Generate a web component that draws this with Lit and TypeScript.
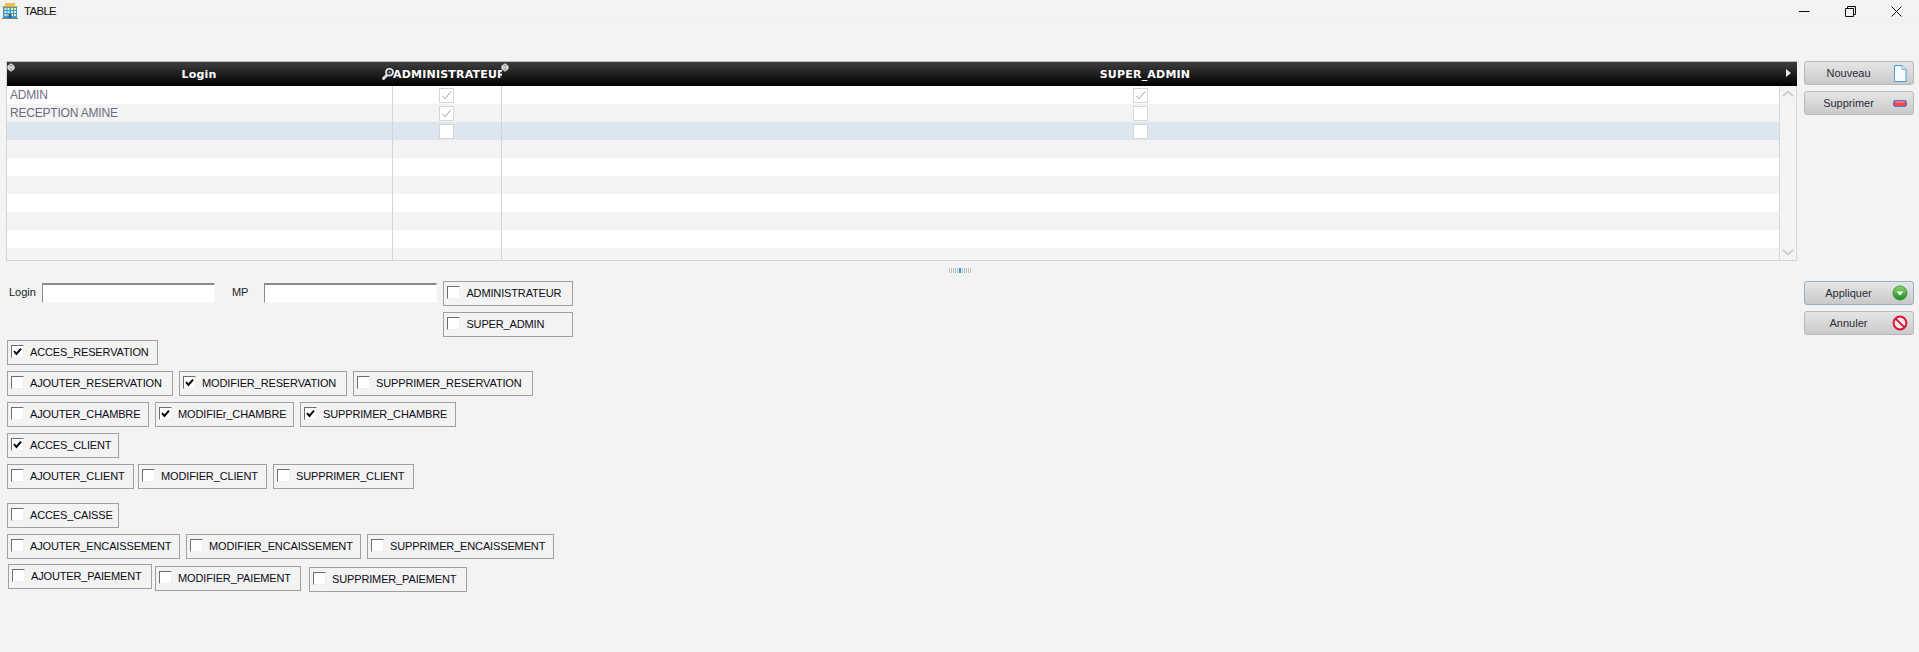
import { LitElement, html, css, svg } from "lit";
import { customElement } from "lit/decorators.js";

interface Perm { label: string; width: number; left: number; top?: number; checked?: boolean; }
interface PermRow { top: number; items: Perm[]; }

const ROWS: PermRow[] = [
  { top: 3, items: [{ label: "ACCES_RESERVATION", width: 151, left: 0, checked: true }] },
  { top: 6, items: [
    { label: "AJOUTER_RESERVATION", width: 166, left: 0 },
    { label: "MODIFIER_RESERVATION", width: 168, left: 6, checked: true },
    { label: "SUPPRIMER_RESERVATION", width: 180, left: 6 },
  ] },
  { top: 6, items: [
    { label: "AJOUTER_CHAMBRE", width: 142, left: 0 },
    { label: "MODIFIEr_CHAMBRE", width: 139, left: 6, checked: true },
    { label: "SUPPRIMER_CHAMBRE", width: 156, left: 6, checked: true },
  ] },
  { top: 6, items: [{ label: "ACCES_CLIENT", width: 112, left: 0, checked: true }] },
  { top: 6, items: [
    { label: "AJOUTER_CLIENT", width: 127, left: 0 },
    { label: "MODIFIER_CLIENT", width: 129, left: 4 },
    { label: "SUPPRIMER_CLIENT", width: 141, left: 6 },
  ] },
  { top: 14, items: [{ label: "ACCES_CAISSE", width: 112, left: 0 }] },
  { top: 6, items: [
    { label: "AJOUTER_ENCAISSEMENT", width: 173, left: 0 },
    { label: "MODIFIER_ENCAISSEMENT", width: 175, left: 6 },
    { label: "SUPPRIMER_ENCAISSEMENT", width: 187, left: 6 },
  ] },
  { top: 5, items: [
    { label: "AJOUTER_PAIEMENT", width: 144, left: 1 },
    { label: "MODIFIER_PAIEMENT", width: 146, left: 3, top: 2 },
    { label: "SUPPRIMER_PAIEMENT", width: 158, left: 8, top: 3 },
  ] },
];

type TRow = { login: string; admin?: boolean; sup?: boolean; box?: boolean; selected?: boolean };
const TABLE_ROWS: TRow[] = [
  { login: "ADMIN", box: true, admin: true, sup: true },
  { login: "RECEPTION AMINE", box: true, admin: true },
  { login: "", box: true, selected: true },
  ...Array.from({ length: 7 }, () => ({ login: "" })),
];

const hotelIcon = svg`<svg width="16" height="16" viewBox="0 0 16 16">
  <rect x="3" y="0" width="10" height="3" fill="#f5c04a"/>
  <rect x="1" y="3" width="14" height="12" fill="#2f9be0"/>
  <rect x="0" y="3" width="16" height="1" fill="#f5a623"/>
  <rect x="0" y="15" width="16" height="1" fill="#8a7a55"/>
  ${[5, 8, 11].flatMap((y) => [2.5, 5.5, 9, 12].map((x) => svg`<rect x=${x} y=${y} width="2" height="2" fill="#ffe9a8"/>`))}
  <rect x="6.5" y="11" width="3" height="4" fill="#16689f"/>
</svg>`;

const newIcon = svg`<svg width="14" height="17" viewBox="0 0 14 17">
  <path d="M1.5 .5H9L13 4.5V16.5H1.5Z" fill="#f6fbff" stroke="#4a9ad8"/>
  <path d="M9 .5V4.5H13" fill="#d5e8f6" stroke="#7ab6e4"/>
</svg>`;

const removeIcon = svg`<svg width="14" height="7" viewBox="0 0 14 7">
  <rect x=".5" y=".5" width="13" height="6" rx="1.5" fill="#f8474f" stroke="#3f86d8"/>
  <rect x="2" y="1.5" width="10" height="1" fill="#ff9a9e"/>
</svg>`;

const applyIcon = svg`<svg width="16" height="16" viewBox="0 0 16 16">
  <defs><linearGradient id="ga" x1="0" y1="0" x2="0" y2="1"><stop offset="0" stop-color="#8fd46a"/><stop offset="1" stop-color="#1c8a22"/></linearGradient></defs>
  <circle cx="8" cy="8" r="7" fill="url(#ga)" stroke="#2b8a2b" stroke-width=".8"/>
  <path d="M4.5 6.5H11.5L8 10.5Z" fill="#fff"/>
</svg>`;

const cancelIcon = svg`<svg width="16" height="16" viewBox="0 0 16 16">
  <circle cx="8" cy="8" r="6.4" fill="#f4e6e8" stroke="#d3163c" stroke-width="2"/>
  <path d="M3.6 3.6L12.4 12.4" stroke="#d3163c" stroke-width="2"/>
</svg>`;

const keyIcon = svg`<svg width="12" height="12" viewBox="0 0 12 12">
  <path d="M5 7L1.6 10.4" stroke="#d8d8d8" stroke-width="3" stroke-linecap="round"/>
  <circle cx="7.5" cy="4.2" r="3.5" fill="#333" stroke="#e4e4e4" stroke-width="1.8"/>
  <circle cx="7.5" cy="4.2" r="1" fill="#aaa"/>
</svg>`;

const gripIcon = svg`<svg width="8" height="9" viewBox="0 0 8 9">
  <path d="M4 .2L7.6 3V6L4 8.8L.4 6V3Z" fill="#d8d8d8"/>
  <path d="M4 1.4L6 3.4H2Z" fill="#9a9a9a"/>
  <path d="M4 7.6L6 5.4H2Z" fill="#9a9a9a"/>
</svg>`;

const tableCheck = svg`<svg width="13" height="13" viewBox="0 0 13 13"><path d="M2.5 7L5 9.7L10.8 2.8" fill="none" stroke="#9a9aa2" stroke-width="1"/></svg>`;
const boxCheck = svg`<svg width="11" height="11" viewBox="0 0 11 11"><path d="M2 5L4.4 8L9 2.6" fill="none" stroke="#000" stroke-width="2"/></svg>`;

@customElement("perm-box")
class PermBox extends LitElement {
  static properties = { label: {}, checked: { type: Boolean } };
  label = "";
  checked = false;
  static styles = css`
    :host { display: block; }
    .box { height: 25px; box-sizing: border-box; border: 1px solid #a0a0a0; display: flex; align-items: center; padding: 0 0 2px 3px; white-space: nowrap; overflow: hidden; }
    .check { width: 13px; height: 13px; box-sizing: border-box; background: #fff; border-top: 1px solid #6e6e6e; border-left: 1px solid #6e6e6e; border-right: 1px solid #f0f0f0; border-bottom: 1px solid #f0f0f0; margin-right: 6px; flex: none; display: flex; }
    .text { font: 11px "Liberation Sans", Arial, sans-serif; letter-spacing: -.14px; color: #0b0b14; }
  `;
  render() {
    return html`<div class="box"><span class="check">${this.checked ? boxCheck : ""}</span><span class="text">${this.label}</span></div>`;
  }
}

@customElement("app-root")
class AppRoot extends LitElement {
  static styles = css`
    :host { display: block; width: 1919px; height: 652px; background: #f3f3f3; overflow: hidden; font: 11px "Liberation Sans", Arial, sans-serif; }
    .titlebar { height: 23px; display: flex; align-items: center; background: #f3f3f3; border-bottom: 1px solid #f1f1f1; box-sizing: border-box; padding-left: 2px; }
    .title { font-size: 11.5px; letter-spacing: -.7px; color: #111; margin-left: 6px; }
    .wincontrols { margin-left: auto; display: flex; }
    .winbtn { width: 46px; height: 22px; display: flex; align-items: center; justify-content: center; }
    .top { display: flex; margin-top: 38px; padding-left: 6px; }
    .table { width: 1791px; height: 200px; box-sizing: border-box; border: 1px solid #d4d4d4; border-top-color: #bdbdbd; border-right: 0; position: relative; overflow: hidden; background: #fff; flex: none; }
    .thead { display: grid; grid-template-columns: 386px 109px 1295px; height: 24px; background: linear-gradient(#3e3e3e, #000); color: #fff; font: bold 11px "DejaVu Sans", Verdana, sans-serif; letter-spacing: .2px; }
    .th { display: flex; align-items: center; justify-content: center; overflow: hidden; white-space: nowrap; }
    .th.login { padding-right: 2px; box-sizing: border-box; }
    .th.clip { justify-content: flex-start; padding-left: 0; }
    .th.wide { padding-right: 9px; box-sizing: border-box; }
    .tr { display: grid; grid-template-columns: 386px 109px 1278px; height: 18px; background: #fff; }
    .tr.alt { background: #f3f3f3; }
    .tr.sel { background: #dce6f1; }
    .td { display: flex; align-items: center; justify-content: center; border-right: 1px solid #d4d4d4; box-sizing: border-box; padding-right: 2px; }
    .td.first { justify-content: flex-start; padding: 0 0 0 3px; font-size: 12px; letter-spacing: -.2px; color: #6c6c7c; }
    .td.last { border-right: 0; }
    .tick { width: 15px; height: 15px; box-sizing: border-box; border: 1px solid #d6d6d6; background: #fff; display: flex; }
    .overlay { position: absolute; }
    .grip1 { left: 0; top: 0; }
    .grip2 { left: 494px; top: 0; }
    .keyic { left: 375px; top: 6px; }
    .sortarrow { right: 6px; top: 7px; width: 0; height: 0; border-left: 5px solid #e8e8e8; border-top: 4px solid transparent; border-bottom: 4px solid transparent; }
    .scrollbar { right: 0; top: 24px; bottom: 0; width: 18px; background: #f3f3f3; border-left: 1px solid #d8d8d8; border-right: 1px solid #d8d8d8; box-sizing: border-box; display: flex; flex-direction: column; justify-content: space-between; align-items: center; padding: 4px 0; }
    .side { display: flex; flex-direction: column; gap: 6px; margin-left: 7px; width: 110px; flex: none; }
    .btn { height: 24px; box-sizing: border-box; border: 1px solid #b8b8b8; border-radius: 3px; background: linear-gradient(#e6e6e6, #c9c9c9); display: flex; align-items: center; padding-right: 5px; color: #2c2c3c; }
    .btn.focus { border-color: #8fb2c6; }
    .btn .lbl { flex: 1; text-align: center; }
    .btn .ic { width: 16px; height: 18px; display: flex; align-items: center; justify-content: center; flex: none; }
    .splitter { height: 20px; display: flex; align-items: flex-start; justify-content: center; gap: 1px; padding-top: 7px; box-sizing: border-box; }
    .splitter i { width: 1px; height: 5px; background: #bdbdbd; }
    .splitter i.on { width: 2px; background: #1e9ae0; }
    .lower { display: flex; padding-left: 7px; }
    .left { width: 1790px; flex: none; }
    .form { display: flex; align-items: flex-start; }
    .flabel { color: #222; margin-top: 5px; }
    .input { height: 20px; width: 173px; box-sizing: border-box; background: #fff; border-top: 2px solid #8a8a8a; border-left: 1px solid #8a8a8a; border-right: 1px solid #fafafa; border-bottom: 1px solid #fafafa; margin-top: 2px; }
    .lg { margin-left: 2px; margin-right: 6px; }
    .mp { margin-left: 17px; margin-right: 16px; }
    .pair { display: flex; flex-direction: column; gap: 6px; width: 130px; margin-left: 6px; }
    .permrow { display: flex; align-items: flex-start; }
  `;

  private permRow(row: PermRow) {
    return html`<div class="permrow" style="margin-top:${row.top}px">
      ${row.items.map((p) => html`<perm-box .label=${p.label} .checked=${!!p.checked}
        style="width:${p.width}px;margin-left:${p.left}px;margin-top:${p.top ?? 0}px"></perm-box>`)}
    </div>`;
  }

  render() {
    return html`
      <div class="titlebar">
        ${hotelIcon}<span class="title">TABLE</span>
        <div class="wincontrols">
          <div class="winbtn"><svg width="11" height="11" viewBox="0 0 11 11"><path d="M0 5.5H10.5" stroke="#111"/></svg></div>
          <div class="winbtn"><svg width="11" height="11" viewBox="0 0 11 11"><path d="M.5 2.5H8.5V10.5H.5ZM2.5 2.5V.5H10.5V8.5H8.5" fill="none" stroke="#111"/></svg></div>
          <div class="winbtn"><svg width="11" height="11" viewBox="0 0 11 11"><path d="M.5 .5L10.5 10.5M10.5 .5L.5 10.5" stroke="#111"/></svg></div>
        </div>
      </div>
      <div class="top">
        <div class="table">
          <div class="thead">
            <div class="th login">Login</div>
            <div class="th clip">ADMINISTRATEUR</div>
            <div class="th wide">SUPER_ADMIN</div>
          </div>
          ${TABLE_ROWS.map((r, i) => html`<div class="tr ${r.selected ? "sel" : i % 2 ? "alt" : ""}">
            <div class="td first">${r.login}</div>
            <div class="td">${r.box ? html`<span class="tick">${r.admin ? tableCheck : ""}</span>` : ""}</div>
            <div class="td last">${r.box ? html`<span class="tick">${r.sup ? tableCheck : ""}</span>` : ""}</div>
          </div>`)}
          <span class="overlay grip1">${gripIcon}</span>
          <span class="overlay grip2">${gripIcon}</span>
          <span class="overlay keyic">${keyIcon}</span>
          <span class="overlay sortarrow"></span>
          <div class="overlay scrollbar">
            <svg width="12" height="7" viewBox="0 0 12 7"><path d="M1 6L6 1.5L11 6" fill="none" stroke="#c4c4c4" stroke-width="1.5"/></svg>
            <svg width="12" height="7" viewBox="0 0 12 7"><path d="M1 1L6 5.5L11 1" fill="none" stroke="#c4c4c4" stroke-width="1.5"/></svg>
          </div>
        </div>
        <div class="side">
          <div class="btn"><span class="lbl">Nouveau</span><span class="ic">${newIcon}</span></div>
          <div class="btn"><span class="lbl">Supprimer</span><span class="ic">${removeIcon}</span></div>
        </div>
      </div>
      <div class="splitter">
        ${[0, 1, 2, 3, 4].map(() => html`<i></i>`)}<i class="on"></i>${[0, 1, 2, 3, 4].map(() => html`<i></i>`)}
      </div>
      <div class="lower">
        <div class="left">
          <div class="form">
            <span class="flabel lg">Login</span>
            <div class="input"></div>
            <span class="flabel mp">MP</span>
            <div class="input"></div>
            <div class="pair">
              <perm-box .label=${"ADMINISTRATEUR"}></perm-box>
              <perm-box .label=${"SUPER_ADMIN"}></perm-box>
            </div>
          </div>
          ${ROWS.map((r) => this.permRow(r))}
        </div>
        <div class="side">
          <div class="btn focus"><span class="lbl">Appliquer</span><span class="ic">${applyIcon}</span></div>
          <div class="btn"><span class="lbl">Annuler</span><span class="ic">${cancelIcon}</span></div>
        </div>
      </div>
    `;
  }
}
